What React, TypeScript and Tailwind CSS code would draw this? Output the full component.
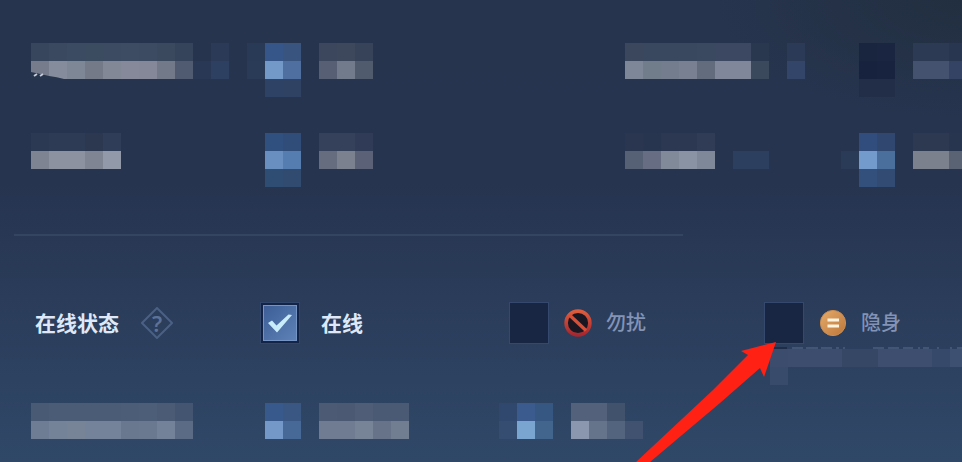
import React, { useState } from "react";

const CELL = 18;

interface MosaicProps {
    // one string per row, colours separated by spaces, "." leaves a cell empty
    rows: string[];
    className?: string;
}

function Mosaic({ rows, className }: MosaicProps) {
    const grid = rows.map((row) => row.split(" "));
    const width = Math.max(...grid.map((row) => row.length)) * CELL;
    const height = grid.length * CELL;

    return (
        <svg
            width={width}
            height={height}
            viewBox={`0 0 ${width} ${height}`}
            shapeRendering="crispEdges"
            className={`block shrink-0 ${className ?? ""}`}
            aria-hidden="true"
        >
            {grid.map((row, y) =>
                row.map((color, x) =>
                    color === "." ? null : (
                        <rect key={`${x}-${y}`} x={x * CELL} y={y * CELL} width={CELL} height={CELL} fill={color} />
                    )
                )
            )}
        </svg>
    );
}

interface StatusOptionProps {
    id: string;
    label: string;
    checked: boolean;
    onChange: () => void;
    icon?: React.ReactNode;
}

function StatusOption({ id, label, checked, onChange, icon }: StatusOptionProps) {
    return (
        <div className="flex items-center min-w-0">
            <span className="relative block w-[38px] h-10 shrink-0">
                <input
                    id={id}
                    type="checkbox"
                    checked={checked}
                    onChange={onChange}
                    className="block w-full h-full appearance-none bg-[#192643] shadow-[0_0_0_1px_#34496d] checked:border-2 checked:border-[#142447] checked:bg-linear-to-br checked:from-[#3c5d96] checked:to-[#5f83b8] checked:shadow-[inset_0_0_0_1px_#7594c4,0_0_0_1px_#30466b]"
                />
                {checked && (
                    <svg viewBox="0 0 38 40" className="absolute inset-0 w-full h-full pointer-events-none" aria-hidden="true">
                        <path d="M7 20 L11 17.5 L15.5 22.5 L27.5 11.5 L31 12 L16 29.5 Z" fill="#c9ecfa" />
                    </svg>
                )}
            </span>
            {icon && <span className="ml-4 shrink-0">{icon}</span>}
            <label
                htmlFor={id}
                className={
                    icon
                        ? "ml-[14px] text-[20px] leading-6 font-medium text-[#8393b6] whitespace-nowrap"
                        : "ml-[22px] text-[21px] leading-6 font-bold text-[#dfe8f7] whitespace-nowrap"
                }
            >
                {label}
            </label>
        </div>
    );
}

function BusyIcon() {
    return (
        <svg width="28" height="28" viewBox="0 0 28 28" className="block" aria-hidden="true">
            <defs>
                <linearGradient id="busy" x1="0" y1="0" x2="0" y2="1">
                    <stop offset="0" stopColor="#dd5c3c" />
                    <stop offset="1" stopColor="#a8262e" />
                </linearGradient>
            </defs>
            <circle cx="14" cy="14" r="11.9" fill="#1b1722" stroke="url(#busy)" strokeWidth="3.6" />
            <path d="M6 6.5 L22 21.5" stroke="#d64f36" strokeWidth="3.4" />
        </svg>
    );
}

function HiddenIcon() {
    return (
        <svg width="28" height="28" viewBox="0 0 28 28" className="block" aria-hidden="true">
            <defs>
                <linearGradient id="hidden" x1="0" y1="0" x2="1" y2="1">
                    <stop offset="0" stopColor="#e4ab6a" />
                    <stop offset="1" stopColor="#bd763a" />
                </linearGradient>
            </defs>
            <circle cx="14" cy="14" r="12.6" fill="url(#hidden)" stroke="#c98d50" strokeWidth="1" />
            <path d="M8.5 11 H20 M8.5 17 H20" stroke="#fff3e2" strokeWidth="3" />
        </svg>
    );
}

export default function App() {
    const [status, setStatus] = useState("online");

    return (
        <main
            className="relative min-h-screen overflow-hidden pt-[43px] bg-linear-to-b from-[#26344e] via-[#263450] via-40% to-[#304868]"
            style={{ fontFamily: '"Noto Sans", "Noto Sans CJK SC", sans-serif' }}
        >
            <div className="absolute inset-0 pointer-events-none bg-[radial-gradient(ellipse_at_top_right,#222f40_0%,transparent_18%)]" />

            <section className="relative flex flex-col gap-9 pl-[31px]">
                <div className="grid grid-cols-[minmax(0,234fr)_minmax(0,360fr)_minmax(0,234fr)_minmax(0,103fr)] items-start">
                    <div className="relative">
                        <Mosaic
                            rows={[
                                "#37465d #3a495f #3b4b61 #3b4b60 #3c4b62 #3d4c63 #3c4b61 #3a495e #35445b . #2a3a57 . #293a57",
                                "#777c8d #858c9b #7d8796 #747a88 #838896 #85899a #858898 #727988 #505b71 #283855 #2e4062 . #293b57",
                            ]}
                        />
                        <svg width="34" height="9" viewBox="0 0 34 9" className="absolute left-0 top-7" aria-hidden="true">
                            <path d="M0 1 Q10 3 18 5 Q26 6 33 8 L0 8 Z" fill="#27354d" />
                            <path d="M3 5 L6 3 M9 5 L12 3" stroke="#c6ccda" strokeWidth="2" />
                        </svg>
                    </div>
                    <div className="flex gap-[18px]">
                        <Mosaic rows={["#36568a #38547f", "#7399c9 #4e6f9f", "#2d4264 #304264"]} />
                        <Mosaic rows={["#3c465c #3e485d #374359", "#575f74 #727b8b #505b6d"]} />
                    </div>
                    <Mosaic
                        rows={[
                            "#3a475c #3a485f #3a485f #3a485f #3a4860 #3c4862 #3c4862 #29374f . #2b3a56",
                            "#7e8798 #727d8b #747d8e #788091 #626c7d #81879a #81879a #3b495d . #34456a",
                        ]}
                    />
                    <div className="flex gap-[18px]">
                        <Mosaic rows={["#19253f #1a2641", "#17233e #18243f", "#222e48 #222e48"]} />
                        <Mosaic rows={["#2d3a54 #2d3a54 #28364f", "#445270 #445270 #344363"]} />
                    </div>
                </div>

                <div className="grid grid-cols-[minmax(0,234fr)_minmax(0,360fr)_minmax(0,234fr)_minmax(0,103fr)] items-start">
                    <Mosaic
                        rows={[
                            "#2c3952 #2e3b54 #2e3b54 #2b3850 #303d58",
                            "#7e8492 #8c929f #8c929f #7f8593 #9299a9",
                        ]}
                    />
                    <div className="flex gap-[18px]">
                        <Mosaic rows={["#30507f #304c78", "#688fbf #557daf", "#2f4c72 #304b6f"]} />
                        <Mosaic rows={["#35415a #35415a #303b57", "#666d7f #7b818f #5b6277"]} />
                    </div>
                    <Mosaic
                        rows={[
                            "#2a3650 #28354f #2c3852 #2c3852 #303c56",
                            "#566176 #676d83 #818a99 #8993a3 #7e8898 . #2d3f5f #2d3f5f . . . . #293b57",
                        ]}
                    />
                    <div className="flex gap-[18px]">
                        <Mosaic rows={["#314d7d #30486f", "#739ccd #4b6f9d", "#334f7c #314b73"]} />
                        <Mosaic rows={["#2c3951 #2c3951 #28354e", "#7b828e #7b828e #596374"]} />
                    </div>
                </div>
            </section>

            <hr className="relative mt-[47px] ml-[14px] w-[69.5%] h-[2px] border-0 bg-[#334560]" />

            <section className="relative mt-[67px] pl-[35px] grid grid-cols-[minmax(0,226fr)_minmax(0,249fr)_minmax(0,255fr)_minmax(0,197fr)] items-center">
                <div className="flex items-center gap-[22px]">
                    <h2 className="text-[21px] leading-6 font-bold text-[#dfe8f7] whitespace-nowrap">在线状态</h2>
                    <button type="button" aria-label="在线状态" className="relative w-8 h-8 text-[22px] leading-8 text-[#5c7299]">
                        <svg viewBox="0 0 32 32" className="absolute inset-0 w-full h-full" aria-hidden="true">
                            <path d="M16 1 L31 16 L16 31 L1 16 Z" fill="none" stroke="#4a6084" strokeWidth="2" />
                        </svg>
                        <span className="relative font-semibold">?</span>
                    </button>
                </div>
                <StatusOption id="online" label="在线" checked={status === "online"} onChange={() => setStatus("online")} />
                <StatusOption
                    id="busy-status"
                    label="勿扰"
                    checked={status === "busy"}
                    onChange={() => setStatus("busy")}
                    icon={<BusyIcon />}
                />
                <StatusOption
                    id="hidden-status"
                    label="隐身"
                    checked={status === "hidden"}
                    onChange={() => setStatus("hidden")}
                    icon={<HiddenIcon />}
                />
            </section>

            {/* Masked hint under the last option */}
            <div className="relative ml-[80%] mt-[3px]">
                <svg width="194" height="3" viewBox="0 0 194 3" className="block" aria-hidden="true">
                    <path d="M2 2 H17" stroke="#1e2c48" strokeWidth="2" />
                    <path
                        d="M22 2 H33 M36 2 H48 M51 2 H62 M66 2 H69 M73 2 H75 M103 2 H114 M118 2 H129 M133 2 H143 M148 2 H150 M153 2 H159 M167 2 H169 M180 2 H182 M187 2 H193"
                        stroke="#4b5d7d"
                        strokeWidth="1.5"
                    />
                </svg>
                <Mosaic
                    rows={[
                        "#3b4c6c #3c4d6d #3c4d6d #3c4d6d #364765 #364765 #3d4e6f #3d4e6f #3d4e6f #37496a #3e5071",
                        "#384b6a",
                    ]}
                />
            </div>

            <section className="relative mt-[18px] pl-[31px] grid grid-cols-[minmax(0,234fr)_minmax(0,234fr)_minmax(0,463fr)]">
                <Mosaic
                    rows={[
                        "#495a75 #4b5c77 #4b5c77 #4b5c77 #4b5c77 #4c5d78 #4d5e79 #4b5b75 #435571",
                        "#6f7d94 #758399 #778397 #75839a #75839a #6a788f #6b7990 #748299 #5c6b85",
                    ]}
                />
                <div className="flex gap-[18px]">
                    <Mosaic rows={["#38598b #3a5784", "#7499c8 #476998"]} />
                    <Mosaic rows={["#4c5b73 #4b5a72 #505d77 #4a5974 #4a5974", "#6f7c91 #6f7c91 #778397 #667389 #717e91"]} />
                </div>
                <div className="flex gap-[18px]">
                    <Mosaic rows={["#30486d #3b5a8d #365781", "#354d71 #79a5d0 #42658d"]} />
                    <Mosaic rows={["#53617b #53617b #41526d .", "#8a97ae #66748b #53647e #40526f"]} />
                </div>
            </section>

            <svg width="140" height="120" viewBox="0 0 140 120" className="absolute left-[636px] top-[342px] pointer-events-none" aria-hidden="true">
                <path d="M140 0 L105 9 L112 13 L77 48 L0 120 L14 120 L84 61 L124 26 L128 35 Z" fill="#ff2114" />
            </svg>
        </main>
    );
}
